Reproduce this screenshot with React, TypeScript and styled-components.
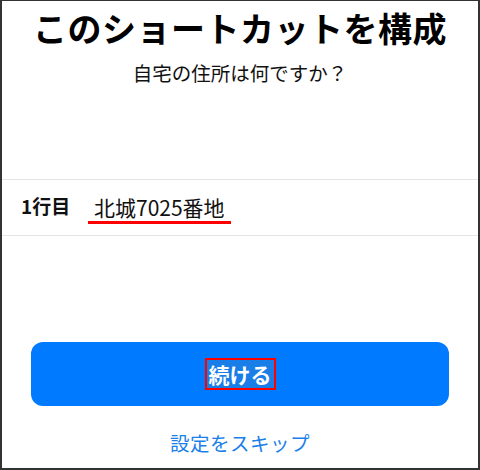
import React from "react";
import styled, { createGlobalStyle } from "styled-components";

const GlobalStyle = createGlobalStyle`
  html, body {
    margin: 0;
    padding: 0;
    background: #ffffff;
  }
  body {
    font-family: "Noto Sans CJK JP", "Noto Sans", sans-serif;
  }
`;

const Frame = styled.div`
  box-sizing: border-box;
  width: 480px;
  height: 470px;
  border: 2px solid #333333;
  border-top-width: 1px;
  background: #ffffff;
  display: flex;
  flex-direction: column;
  overflow: hidden;
`;

const Title = styled.h1`
  margin: 6px 0 0;
  font-size: 34px;
  line-height: 42px;
  font-weight: 700;
  color: #000000;
  text-align: center;
  letter-spacing: 0.5px;
`;

const Subtitle = styled.p`
  margin: 10px 0 0;
  font-size: 19.5px;
  line-height: 28px;
  color: #111111;
  text-align: center;
`;

const FieldRow = styled.div`
  margin-top: 92px;
  height: 55px;
  border-top: 1px solid #e4e4e4;
  border-bottom: 1px solid #e4e4e4;
  display: flex;
  align-items: center;
  padding-left: 19px;
`;

const FieldLabel = styled.span`
  font-size: 19px;
  font-weight: 700;
  color: #111111;
  width: 74px;
  margin-top: -4px;
`;

const FieldValue = styled.span`
  font-size: 21px;
  line-height: 28px;
  color: #111111;
  padding: 0 6px 0 6px;
  border-bottom: 3px solid #ff0000;
  margin-left: -7px;
  margin-top: 2px;
`;

const Actions = styled.div`
  flex: 1;
  display: flex;
  flex-direction: column;
  align-items: center;
  padding-top: 106px;
`;

const PrimaryButton = styled.button`
  width: 418px;
  height: 64px;
  border: none;
  border-radius: 12px;
  background: #007aff;
  display: flex;
  align-items: center;
  justify-content: center;
  cursor: pointer;
`;

const ButtonLabel = styled.span`
  font-family: "Noto Sans CJK JP", sans-serif;
  font-size: 21px;
  font-weight: 700;
  color: #ffffff;
  line-height: 28px;
  padding: 0 2px;
  border: 2px solid #ff0000;
  background: #1a7ee8;
`;

const SkipLink = styled.a`
  margin-top: 22px;
  font-size: 19.5px;
  color: #1a7fe8;
  text-decoration: none;
  letter-spacing: 0.5px;
`;

export default function App() {
  return (
    <>
      <GlobalStyle />
      <Frame>
        <Title>このショートカットを構成</Title>
        <Subtitle>自宅の住所は何ですか？</Subtitle>
        <FieldRow>
          <FieldLabel>1行目</FieldLabel>
          <FieldValue>北城7025番地</FieldValue>
        </FieldRow>
        <Actions>
          <PrimaryButton>
            <ButtonLabel>続ける</ButtonLabel>
          </PrimaryButton>
          <SkipLink href="#">設定をスキップ</SkipLink>
        </Actions>
      </Frame>
    </>
  );
}
